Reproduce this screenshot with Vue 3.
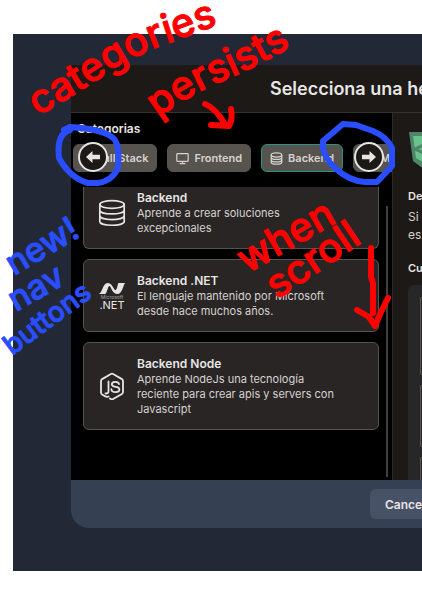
<script setup>
const categories = [
  { name: 'Full Stack', icon: 'layers' },
  { name: 'Frontend', icon: 'monitor' },
  { name: 'Backend', icon: 'database', active: true },
  { name: 'Mobile', icon: 'phone' },
]
const tools = [
  { name: 'Backend', icon: 'database', text: 'Aprende a crear soluciones excepcionales', cut: true },
  { name: 'Backend .NET', icon: 'dotnet', text: 'El lenguaje mantenido por Microsoft desde hace muchos años.' },
  { name: 'Backend Node', icon: 'node', text: 'Aprende NodeJs una tecnología reciente para crear apis y servers con Javascript' },
]
</script>

<template>
  <div class="page">
    <div class="stage">
      <section class="modal">
        <header class="head"><h1>Selecciona una he</h1></header>
        <div class="body">
          <div class="picker">
            <h2>Categorias</h2>
            <div class="strip">
              <nav class="chips" aria-label="Categorias">
                <button v-for="c in categories" :key="c.name" class="chip" :class="[c.icon, { active: c.active }]" type="button">
                  <svg viewBox="0 0 16 16" fill="none" stroke="currentColor" stroke-width="1.5">
                    <path v-if="c.icon === 'layers'" d="M8 2l6 3-6 3-6-3zM2 8l6 3 6-3M2 11l6 3 6-3" />
                    <g v-else-if="c.icon === 'monitor'"><rect x="1" y="2" width="14" height="9.500" rx="1" /><path d="M8 11.500v2.500M4.500 14.200h7" /></g>
                    <g v-else-if="c.icon === 'database'"><ellipse cx="8" cy="3.700" rx="6.500" ry="2.500" /><path d="M1.500 3.700v8.800c0 3.300 13 3.300 13 0V3.700M1.500 6.700c0 3.200 13 3.200 13 0M1.500 9.700c0 3.200 13 3.200 13 0" /></g>
                    <rect v-else x="4" y="1.500" width="8" height="13" rx="1.500" />
                  </svg>
                  <span>{{ c.name }}</span>
                </button>
              </nav>
              <button class="arrow prev" type="button" aria-label="Anterior">
                <svg viewBox="0 0 16 16" width="16" height="16"><path d="M1 8l6.500-6v3.800H15v4.400H7.500V14z" fill="currentColor" /></svg>
              </button>
              <button class="arrow next" type="button" aria-label="Siguiente">
                <svg viewBox="0 0 16 16" width="16" height="16"><path d="M15 8L8.500 2v3.800H1v4.400h7.500V14z" fill="currentColor" /></svg>
              </button>
            </div>
            <div class="scroller">
              <div class="list">
                <article v-for="t in tools" :key="t.name" class="card" :class="{ cut: t.cut }">
                  <svg v-if="t.icon === 'database'" class="logo" viewBox="0 0 28 28" fill="none" stroke="currentColor" stroke-width="1.700">
                    <ellipse cx="14" cy="5.500" rx="12.200" ry="3.800" />
                    <path d="M1.800 5.500v17c0 5 24.400 5 24.400 0v-17M1.800 11.200c0 5 24.400 5 24.400 0M1.800 16.800c0 5 24.400 5 24.400 0" />
                  </svg>
                  <svg v-else-if="t.icon === 'dotnet'" class="logo" viewBox="0 0 28 28" fill="currentColor">
                    <path d="M1 12C4.500 10 5 1 9.500 1c5 0 6 7 8 7 1.500 0 2-5 2.800-7H27c-2 3-3 11-7.500 11-5.500 0-6.500-8-8-8-1.500 0-2 5-4 8z" />
                    <text x="14" y="17" text-anchor="middle" class="tiny">Microsoft</text>
                    <text x="14" y="27" text-anchor="middle" class="net">.NET</text>
                  </svg>
                  <svg v-else class="logo" viewBox="0 0 28 28" fill="none" stroke="currentColor" stroke-width="1.800" stroke-linecap="round" stroke-linejoin="round">
                    <path d="M10.500 24.500c-1.500.9-2.500.3-4-.6l-2.400-1.400Q3 21.800 3 20.500V9Q3 7.800 4.100 7.100L12.900 2q1.100-.6 2.200 0l8.800 5.100Q25 7.800 25 9v11q0 1.300-1.100 2l-8.800 5q-1.100.6-2.200 0l-1-.6" />
                    <path d="M10.500 9.500v9.700q0 2.500-3 2.300M21 12.200q-.3-2.400-3.700-2.400-3.500 0-3.500 2.500 0 2.200 3.700 2.500 3.900.3 3.900 2.700 0 2.600-3.900 2.600-4 0-4.100-2.900" />
                  </svg>
                  <div class="copy"><h3>{{ t.name }}</h3><p>{{ t.text }}</p></div>
                </article>
              </div>
              <div class="track"></div>
            </div>
          </div>
          <aside class="detail">
            <svg class="shield" viewBox="0 0 34 38" width="34" height="38">
              <path d="M1 0h33v38H17L5 29z" fill="#4d8668" />
              <path d="M5 4h29v28H18L8 26z" fill="#68c48c" />
              <path d="M20 11L7 17l13 6" fill="none" stroke="#4d8668" stroke-width="3" />
            </svg>
            <h4>Des</h4>
            <p>Si<br />es</p>
            <h4>Cur</h4>
            <div class="courses"><div class="course"></div><div class="course"></div><div class="course"></div></div>
          </aside>
        </div>
        <footer class="foot"><button type="button">Cancel</button></footer>
      </section>
    </div>

    <svg class="notes" width="422" height="606" viewBox="0 0 422 606">
      <defs>
        <path id="n1" d="M38 116Q70 98 105 75T172 42Q200 30 260 12" />
        <path id="n2" d="M158 118Q190 94 225 80T330 24" />
        <path id="n3" d="M247 274L355 212" />
        <path id="n4" d="M277 300L385 227" />
        <path id="n5" d="M14 276L120 213" />
        <path id="n6" d="M16 312L90 270" />
        <path id="n7" d="M12 356L110 284" />
      </defs>
      <g class="red">
        <text class="large"><textPath href="#n1">categories</textPath></text>
        <text class="large"><textPath href="#n2">persists</textPath></text>
        <text class="large"><textPath href="#n3">when</textPath></text>
        <text class="large"><textPath href="#n4">scroll</textPath></text>
        <path class="pen" d="M205 104Q216 108 226 126M231 109Q233 119 229 126L211 125" />
        <path class="pen" d="M371 248V277L373 283V313M357 310L369 317 375 326 381 312 388 298" />
      </g>
      <g class="blue">
        <text class="medium"><textPath href="#n5">new!</textPath></text>
        <text class="medium"><textPath href="#n6">nav</textPath></text>
        <text class="small"><textPath href="#n7">buttons</textPath></text>
        <path class="pen" d="M64 130L70 127C85 128 107 130 115 140C120 148 118 158 118 168Q112 181 98 183H88Q70 178 59 158Q56 134 70 130" />
        <path class="pen" d="M343 124L323 141Q321 155 335 168T365 182H377L392 166V148Q387 137 373 131L356 125Z" />
      </g>
    </svg>
  </div>
</template>

<style>
body { margin: 0; background: #fff; }
</style>

<style scoped>
* { box-sizing: border-box; }
.page { position: relative; padding: 34px 0 35px 13px; overflow: hidden; font-family: Inter, "Liberation Sans", sans-serif; color: #e7e5e4; }
.stage { padding: 31px 0 43px 58px; background: #222836; }
.modal { overflow: hidden; border-radius: 0 0 0 18px; background: #364053; }
h1, h2, h3, h4, p { margin: 0; white-space: nowrap; }
button { font-family: inherit; color: inherit; margin: 0; }
.head { height: 48px; padding-left: 199px; background: #1c1917; border-bottom: 1px solid #35312e; overflow: hidden; }
h1 { font-size: 18px; line-height: 48px; font-weight: 600; }
.body { display: grid; grid-template-columns: 322px minmax(0, 1fr); background: #1c1917; }
.picker { min-width: 0; padding: 8px 0 3px 2px; background: #000; border-right: 1px solid #2e2a27; }
h2 { padding-left: 4px; font-size: 12px; line-height: 16px; font-weight: 600; }
.strip { position: relative; margin-top: 7px; }
.chips { display: flex; gap: 10px; overflow: hidden; }
.chip { flex: none; display: flex; align-items: center; gap: 5px; height: 28px; padding: 0 8px; border: 1px solid #57534e; border-radius: 6px; background: #57534e; color: #d6d3d1; font-size: 11px; font-weight: 600; white-space: nowrap; }
.chip svg { width: 13px; height: 13px; }
.chip.layers svg { width: 10px; height: 10px; }
.chip.active { border-color: #2a9484; }
.arrow { position: absolute; top: -2px; display: grid; place-items: center; width: 30px; height: 30px; padding: 0; border: 2px solid #e7e5e4; border-radius: 50%; background: #1c1917; }
.prev { left: 5px; }
.next { right: 8px; }
.scroller { display: flex; justify-content: space-between; margin-top: 15px; padding: 0 4px 0 10px; }
.list { display: grid; gap: 10px; align-content: start; width: 296px; padding-bottom: 47px; }
.card { display: flex; align-items: center; gap: 11px; padding: 12px 14px; border: 1px solid #57534e; border-radius: 6px; background: #292524; }
.cut { padding-top: 2px; border-top: 0; border-radius: 0 0 6px 6px; }
.logo { flex: none; width: 28px; height: 28px; }
.tiny { font-size: 5px; opacity: 0.6; }
.net { font-size: 11px; }
.copy { max-width: 200px; }
h3 { font-size: 12px; line-height: 17px; font-weight: 600; }
.copy p { font-size: 11px; line-height: 15px; color: #d6d3d1; white-space: normal; }
.track { width: 2px; margin-top: 19px; background: #414143; }
.detail { display: flex; flex-direction: column; min-width: 0; padding: 19px 0 0 15px; overflow: hidden; }
.shield { flex: none; margin-bottom: 18px; }
h4 { font-size: 11px; line-height: 16px; font-weight: 600; }
.detail p { margin: 4px 0 16px; font-size: 12px; line-height: 18px; color: #d6d3d1; }
.courses { display: grid; grid-template-rows: 78px 62px 62px; gap: 10px; flex: 1 1 0; min-height: 0; margin-top: 9px; padding: 12px 0 0 12px; border-radius: 6px 0 0 0; background: #27272a; overflow: hidden; }
.course { border: 1px solid #57534e; border-right: 0; border-radius: 6px 0 0 6px; background: #292524; }
.foot { padding: 9px 0 9px 299px; overflow: hidden; }
.foot button { height: 30px; padding: 0 15px; border: 0; border-radius: 6px; background: #475266; font-size: 12px; font-weight: 600; }
.notes { position: absolute; top: 0; left: 0; pointer-events: none; }
.notes text { stroke-width: 1; stroke-linejoin: round; font-weight: 500; }
.large { font-size: 40px; }
.medium { font-size: 34px; }
.small { font-size: 28px; }
.red text { fill: #f00; stroke: #f00; }
.blue text { fill: #294eff; stroke: #294eff; }
.pen { fill: none; stroke-width: 6; stroke-linecap: round; stroke-linejoin: round; }
.red .pen { stroke: #f00; }
.blue .pen { stroke: #294eff; }
</style>
